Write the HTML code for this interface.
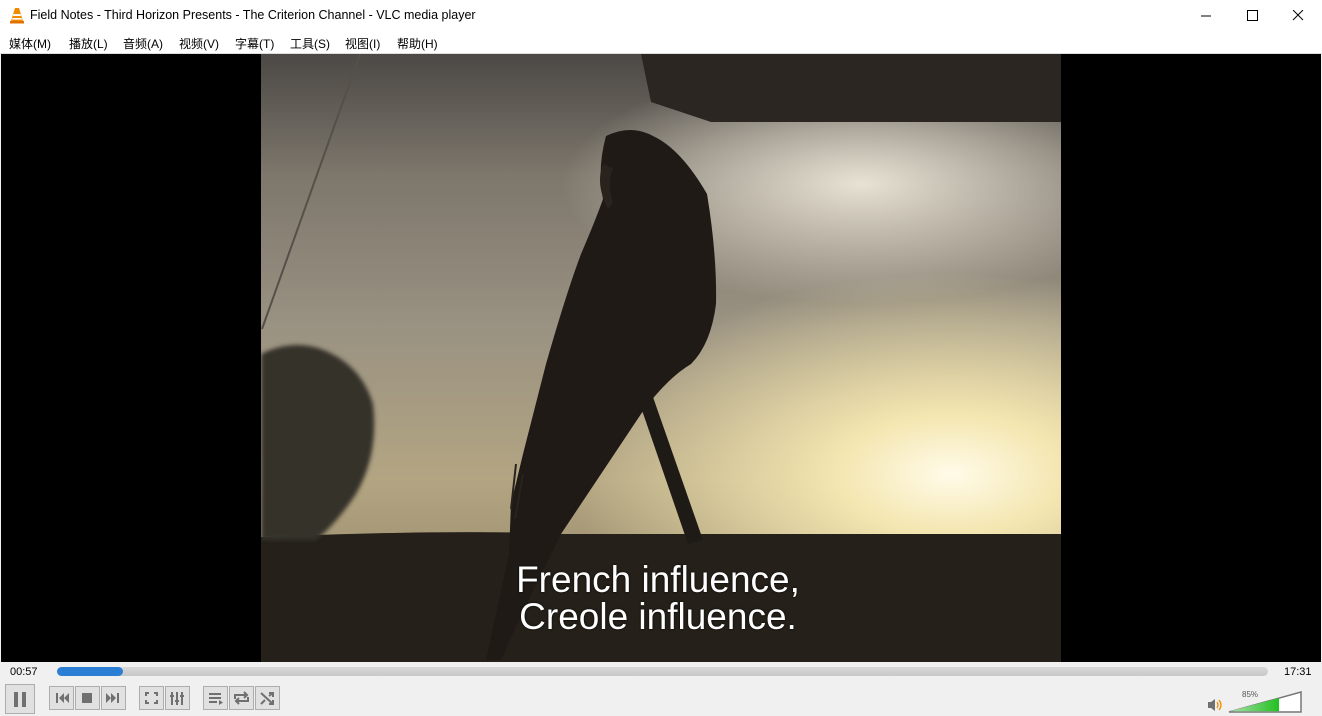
<!DOCTYPE html>
<html><head><meta charset="utf-8"><style>
*{margin:0;padding:0;box-sizing:border-box}
body{width:1322px;height:716px;overflow:hidden;background:#f0f0f0;font-family:"Liberation Sans","Noto Sans CJK SC",sans-serif;position:relative}
.title{position:absolute;left:0;top:0;width:1322px;height:31px;background:#fff;font-size:12.5px;color:#000}
.title span{position:absolute;left:30px;top:8px}
.menu{position:absolute;left:0;top:31px;width:1322px;height:23px;background:#fff;font-size:12px;border-bottom:1px solid #ddd}
.menu span{position:absolute;top:4px}
.video{position:absolute;left:1px;top:54px;width:1320px;height:608px;background:#000;overflow:hidden}
.frame{position:absolute;left:260px;top:0;width:800px;height:608px;overflow:hidden;
background:radial-gradient(ellipse 380px 200px at 690px 420px,#fffbe8 0%,#f4e6b0 30%,rgba(200,180,130,0) 100%),
radial-gradient(ellipse 300px 120px at 600px 130px,#e8e2d4 0%,rgba(180,170,150,0) 100%),
linear-gradient(180deg,#4c4845 0%,#7d776c 20%,#9a9282 45%,#b3a582 70%,#8c7f60 100%)}
.sub{position:absolute;left:0;width:1314px;text-align:center;color:#fff;font-size:37px;line-height:37px;top:507px;text-shadow:0 0 2px #000}
.ctl{position:absolute;left:0;top:662px;width:1322px;height:54px;background:#f0f0f0}
.btn{position:absolute;top:24px;width:25px;height:24px;border:1px solid #adadad;background:#e1e1e1}
</style></head><body>
<div class="title">
<svg style="position:absolute;left:9px;top:7px" width="16" height="17" viewBox="0 0 16 17"><path d="M6 1h4l4 13H2z" fill="#f28a00"/><path d="M4.5 7h7l.6 2h-8.2zM3.4 11h9.2l.5 1.6H2.9z" fill="#fff"/><rect x="1" y="14" width="14" height="2.5" fill="#e07000"/></svg>
<span>Field Notes - Third Horizon Presents - The Criterion Channel - VLC media player</span>
<svg style="position:absolute;left:1200px;top:10px" width="110" height="12"><path d="M1 6h10" stroke="#000"/><rect x="47.5" y="0.5" width="10" height="10" fill="none" stroke="#000"/><path d="M93 0l10 10M103 0l-10 10" stroke="#000"/></svg>
</div>
<div class="menu"><span style="left:9px">媒体(M)</span><span style="left:69px">播放(L)</span><span style="left:123px">音频(A)</span><span style="left:179px">视频(V)</span><span style="left:235px">字幕(T)</span><span style="left:290px">工具(S)</span><span style="left:345px">视图(I)</span><span style="left:397px">帮助(H)</span></div>
<div class="video"><div class="frame">
<svg width="800" height="608" style="position:absolute;left:0;top:0">
<defs><filter id="b"><feGaussianBlur stdDeviation="2"/></filter></defs>
<path d="M380 0H800V68H450L390 48Z" fill="#2b2622"/>
<path d="M0 483Q200 475 300 480H800V608H0Z" fill="#252019"/>
<path d="M0 300Q30 285 60 295Q100 310 112 350Q118 400 95 440Q75 470 55 486H0Z" fill="#35302a" filter="url(#b)"/>
<path d="M1 275L99 0" stroke="#555048" stroke-width="2"/>
<path d="M372 330l14-4 56 160-15 4Z" fill="#1e1a16"/>
<path d="M345 82Q370 70 392 82Q420 95 446 140Q456 200 455 250Q450 290 430 310Q405 325 380 360Q340 420 300 480Q260 560 240 606H225L248 500L250 450L262 400L285 310Q305 240 320 200Q335 165 342 145Q336 115 345 82Z" fill="#1f1a16"/>
<path d="M342 110q-8 20 5 45l5-6q-6-18 0-35z" fill="#2a231d"/>
<path d="M255 410l-5 45M262 420l-8 45" stroke="#2a231d" stroke-width="2"/>
</svg>
</div>
<div class="sub">French influence,<br>Creole influence.</div>
</div>
<div class="ctl">
<span style="position:absolute;left:10px;top:4px;font-size:11px">00:57</span>
<div style="position:absolute;left:57px;top:5px;width:1211px;height:9px;border-radius:5px;background:linear-gradient(#d8d8d8,#c8c8c8)"></div>
<div style="position:absolute;left:57px;top:5px;width:66px;height:9px;border-radius:5px;background:#2a7fd4"></div>
<span style="position:absolute;left:1284px;top:4px;font-size:11px">17:31</span>
<div class="btn" style="left:5px;top:22px;width:30px;height:30px"><div style="position:absolute;left:8px;top:7px;width:4px;height:15px;background:#707070"></div><div style="position:absolute;left:16px;top:7px;width:4px;height:15px;background:#707070"></div></div>
<div class="btn" style="left:49px"><svg width="23" height="22"><path d="M6 6h2v10H6zM14 6v10l-5-5zM19 6v10l-5-5z" fill="#707070"/></svg></div>
<div class="btn" style="left:75px"><svg width="23" height="22"><rect x="6" y="6" width="10" height="10" fill="#707070"/></svg></div>
<div class="btn" style="left:101px"><svg width="23" height="22"><path d="M4 6v10l5-5zM9 6v10l5-5zM15 6h2v10h-2z" fill="#707070"/></svg></div>
<div class="btn" style="left:139px"><svg width="23" height="22" fill="none" stroke="#707070" stroke-width="2"><path d="M6 9V6h3M14 6h3v3M17 13v3h-3M9 16H6v-3"/></svg></div>
<div class="btn" style="left:165px"><svg width="23" height="22" stroke="#707070" stroke-width="2"><path d="M6 5v13M11 5v13M16 5v13M4 9h4M9 14h4M14 9h4"/></svg></div>
<div class="btn" style="left:203px"><svg width="23" height="22" stroke="#707070" stroke-width="2"><path d="M5 7h12M5 11h12M5 15h8"/><path d="M15 13l4 2.5-4 2.5z" fill="#707070" stroke="none"/></svg></div>
<div class="btn" style="left:229px"><svg width="23" height="22" fill="none" stroke="#707070" stroke-width="2"><path d="M5 12V8h11M14 5l3 3-3 3M18 10v4H7M9 17l-3-3 3-3"/></svg></div>
<div class="btn" style="left:255px"><svg width="23" height="22" fill="none" stroke="#707070" stroke-width="2"><path d="M5 6l12 11M5 17l4-4M13 9l4-3M13 6h4v4M17 13v4h-4"/></svg></div>
<svg style="position:absolute;left:1207px;top:36px" width="16" height="14"><path d="M1 4h3l4-3v12l-4-3H1z" fill="#707070"/><path d="M10 4q2 3 0 6M12 2q4 5 0 10" fill="none" stroke="#f08c00" stroke-width="1.3"/></svg>
<span style="position:absolute;left:1242px;top:28px;font-size:8px;color:#555">85%</span>
<svg style="position:absolute;left:1228px;top:28px" width="76" height="24"><path d="M1 22L73 2V22Z" fill="#fff" stroke="#777" stroke-width="1.5"/><path d="M2 21.3L51 8V21.3Z" fill="url(#g)"/><defs><linearGradient id="g"><stop offset="0" stop-color="#a8e0a8"/><stop offset="1" stop-color="#22c022"/></linearGradient></defs></svg>
</div>
</body></html>
